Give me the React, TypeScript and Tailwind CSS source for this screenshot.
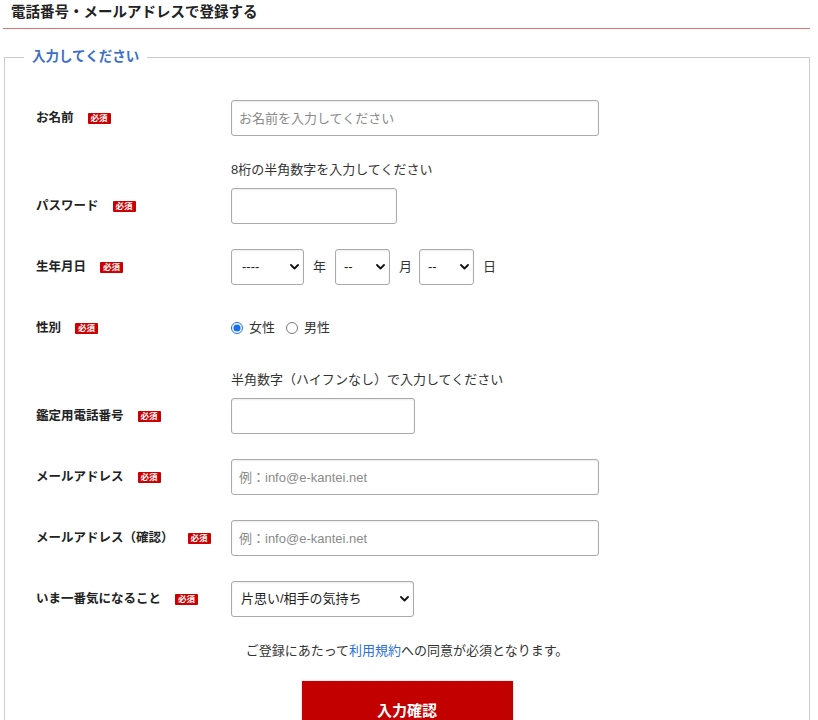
import React from "react";

const font = "font-['Liberation_Sans','Noto_Sans_CJK_JP',sans-serif]";

function Required() {
  return (
    <span className="ml-[14px] inline-block rounded-[1px] bg-[#cc0000] px-[3px] text-[8.5px] font-bold leading-[11px] text-white">
      必須
    </span>
  );
}

function Chevron() {
  return (
    <svg width="9" height="6" viewBox="0 0 9 6" className="pointer-events-none absolute right-[5px] top-1/2 -translate-y-1/2">
      <path d="M1 1l3.5 3.5L8 1" fill="none" stroke="#111" strokeWidth="1.8" strokeLinecap="round" strokeLinejoin="round" />
    </svg>
  );
}

function Select({ width, value, options, pl }: { width: string; value: string; options: string[]; pl: string }) {
  return (
    <div className={`relative h-[36px] ${width}`}>
      <select
        defaultValue={value}
        className={`h-full w-full appearance-none rounded-[3px] border border-[#aaa] bg-white ${pl} text-[13px] text-[#222] shadow-[inset_0_1px_2px_rgba(0,0,0,0.08)] outline-none`}
      >
        {options.map((o) => (
          <option key={o}>{o}</option>
        ))}
      </select>
      <Chevron />
    </div>
  );
}

function Row({ label, children }: { label: string; children: React.ReactNode }) {
  return (
    <div className="flex items-end">
      <div className="flex h-[36px] w-[195px] shrink-0 items-center">
        <span className="text-[12.5px] font-bold leading-[18px] text-[#222]">{label}</span>
        <Required />
      </div>
      <div className="flex flex-col">{children}</div>
    </div>
  );
}

function Helper({ text }: { text: string }) {
  return <p className="mb-[9px] text-[13px] leading-[18px] text-[#333]">{text}</p>;
}

const inputCls =
  "h-[36px] rounded-[3px] border border-[#aaa] bg-white px-[7px] text-[13px] text-[#222] shadow-[inset_0_1px_2px_rgba(0,0,0,0.08)] outline-none placeholder:text-[#8a8a8a]";

export default function App() {
  return (
    <div className={`${font} ml-[3px] w-[807px] bg-white pb-[40px]`}>
      <div className="h-[28px] pl-[8px] pt-[2px] text-[14.5px] font-bold leading-[20px] text-[#222]">
        電話番号・メールアドレスで登録する
      </div>
      <div className="h-px bg-[#e07272]" />

      <fieldset className="ml-px mt-[18px] w-[806px] border border-[#ccc] pb-[30px] pl-[19px] pr-[19px] pt-[33px]">
        <legend className="px-[8px] text-[13.5px] font-bold leading-[20px] text-[#3d6fc8]">入力してください</legend>

        <div className="ml-[12px] flex flex-col gap-[25px]">
          <Row label="お名前">
            <input className={`${inputCls} w-[368px]`} placeholder="お名前を入力してください" />
          </Row>

          <Row label="パスワード">
            <Helper text="8桁の半角数字を入力してください" />
            <input type="password" className={`${inputCls} w-[166px]`} />
          </Row>

          <Row label="生年月日">
            <div className="flex items-center gap-[9px] text-[13px] text-[#333]">
              <Select width="w-[73px]" value="----" options={["----"]} pl="pl-[10px]" />
              <span>年</span>
              <Select width="w-[55px]" value="--" options={["--"]} pl="pl-[8px]" />
              <span className="-mr-[2px]">月</span>
              <Select width="w-[55px]" value="--" options={["--"]} pl="pl-[8px]" />
              <span>日</span>
            </div>
          </Row>

          <Row label="性別">
            <div className="flex h-[36px] items-center text-[13px] text-[#333]">
              <label className="flex items-center">
                <input type="radio" name="sex" defaultChecked className="m-0 h-[12px] w-[12px] accent-[#1a6ff0]" />
                <span className="ml-[6px]">女性</span>
              </label>
              <label className="ml-[11px] flex items-center">
                <input type="radio" name="sex" className="m-0 h-[12px] w-[12px]" />
                <span className="ml-[6px]">男性</span>
              </label>
            </div>
          </Row>

          <Row label="鑑定用電話番号">
            <Helper text="半角数字（ハイフンなし）で入力してください" />
            <input type="tel" className={`${inputCls} w-[184px]`} />
          </Row>

          <Row label="メールアドレス">
            <input className={`${inputCls} w-[368px]`} placeholder="例：info@e-kantei.net" />
          </Row>

          <Row label="メールアドレス（確認）">
            <input className={`${inputCls} w-[368px]`} placeholder="例：info@e-kantei.net" />
          </Row>

          <Row label="いま一番気になること">
            <Select width="w-[183px]" value="片思い/相手の気持ち" options={["片思い/相手の気持ち"]} pl="pl-[9px]" />
          </Row>
        </div>

        <p className="mt-[25px] text-center text-[13px] leading-[18px] text-[#333]">
          ご登録にあたって<a className="text-[#2a6fe0]">利用規約</a>への同意が必須となります。
        </p>

        <div className="mt-[21px] flex justify-center">
          <button
            type="button"
            className="h-[60px] w-[211px] bg-[#c30000] text-[15px] font-bold text-white shadow-[0_0_2px_rgba(0,0,0,0.25)]"
          >
            入力確認
          </button>
        </div>
      </fieldset>
    </div>
  );
}
